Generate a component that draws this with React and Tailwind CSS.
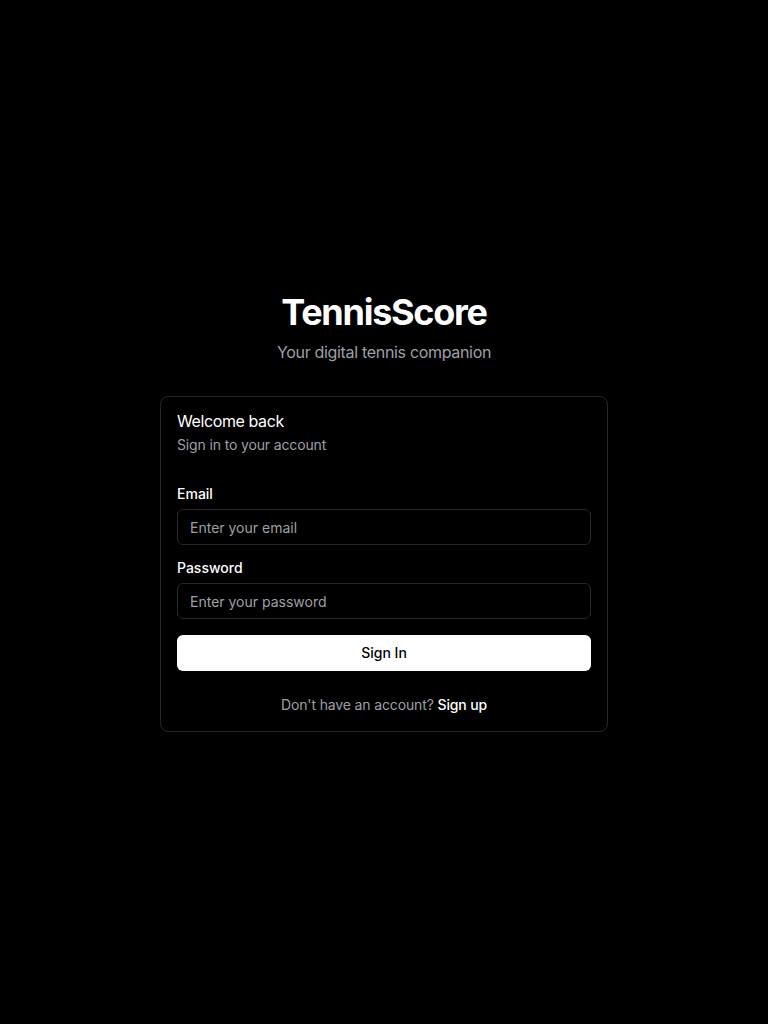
export default function App() {
  return (
    <div
      className="min-h-screen bg-black flex items-center justify-center text-white"
      style={{ fontFamily: "Inter, 'Noto Sans', sans-serif" }}
    >
      <div className="w-full max-w-md">
        {/* Brand */}
        <div className="text-center mb-8">
          <h1 className="text-4xl font-bold tracking-[-0.035em] mb-2">TennisScore</h1>
          <p className="text-base text-zinc-400 tracking-[-0.02em]">Your digital tennis companion</p>
        </div>

        {/* Card */}
        <div className="border border-zinc-800 rounded-lg bg-black">
          <div className="p-4 space-y-1.5">
            <h2 className="text-base font-normal leading-none tracking-tight">Welcome back</h2>
            <p className="text-sm text-zinc-400 tracking-[-0.01em]">Sign in to your account</p>
          </div>

          <form className="p-4 pt-4" onSubmit={(e) => e.preventDefault()}>
            <div className="space-y-4">
              <div className="space-y-2">
                <label className="block text-sm font-medium leading-none">Email</label>
                <input
                  type="email"
                  placeholder="Enter your email"
                  className="w-full h-9 px-3 rounded-md border border-zinc-800 bg-transparent text-sm text-white placeholder:text-zinc-400 focus:outline-none"
                />
              </div>
              <div className="space-y-2">
                <label className="block text-sm font-medium leading-none">Password</label>
                <input
                  type="password"
                  placeholder="Enter your password"
                  className="w-full h-9 px-3 rounded-md border border-zinc-800 bg-transparent text-sm text-white placeholder:text-zinc-400 focus:outline-none"
                />
              </div>
              <button
                type="submit"
                className="w-full h-9 rounded-md bg-white text-black text-sm font-medium"
              >
                Sign In
              </button>
            </div>

            <p className="mt-6 text-center text-sm text-zinc-400 tracking-[-0.01em]">
              Don't have an account?{" "}
              <a href="#" className="text-white font-medium">
                Sign up
              </a>
            </p>
          </form>
        </div>
      </div>
    </div>
  );
}
